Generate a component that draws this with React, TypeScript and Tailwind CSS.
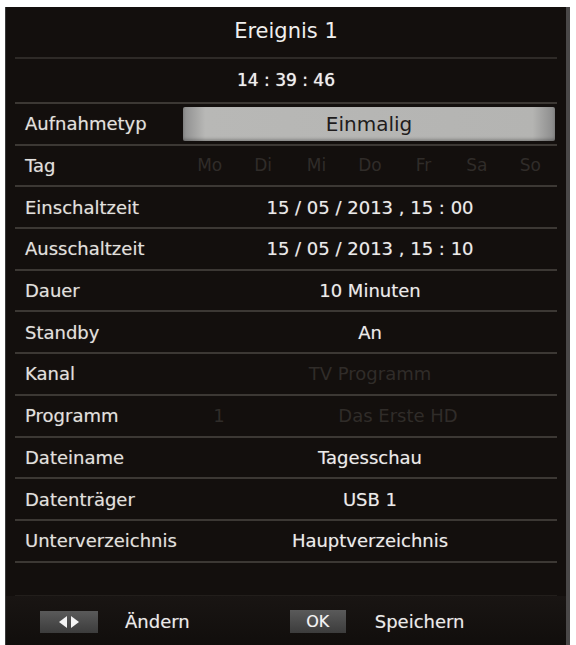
const font = "font-['DejaVu_Sans',Verdana,sans-serif]";

const rows: { label: string; value: string; dim?: boolean }[] = [
  { label: "Einschaltzeit", value: "15 / 05 / 2013 , 15 : 00" },
  { label: "Ausschaltzeit", value: "15 / 05 / 2013 , 15 : 10" },
  { label: "Dauer", value: "10 Minuten" },
  { label: "Standby", value: "An" },
  { label: "Kanal", value: "TV Programm", dim: true },
];

const rows2: { label: string; value: string }[] = [
  { label: "Dateiname", value: "Tagesschau" },
  { label: "Datenträger", value: "USB 1" },
  { label: "Unterverzeichnis", value: "Hauptverzeichnis" },
];

const days = ["Mo", "Di", "Mi", "Do", "Fr", "Sa", "So"];

function Row({ label, children }: { label: string; children: React.ReactNode }) {
  return (
    <div className="mx-[9px] flex h-[41.7px] items-center border-b-2 border-[#3c3834]">
      <div className="w-[168px] shrink-0 pl-[10px] text-[18px] text-[#e2e0de] [text-shadow:0_0_1px_rgba(255,255,255,0.35)]">
        {label}
      </div>
      <div className="flex flex-1 items-center">{children}</div>
    </div>
  );
}

export default function App() {
  return (
    <div className={`h-[645px] w-[576px] overflow-hidden bg-white pl-[5px] pr-[6px] pt-[7px] ${font}`}>
      <div className="flex h-[638px] flex-col border-l border-r-4 border-l-[#3a3a3a] border-r-[#4a4848] bg-[#130f0d]">
        <div className="mx-[9px] flex h-[52px] shrink-0 items-center justify-center border-b-2 border-[#2e2a27] text-[21px] text-[#f0efee]">
          Ereignis 1
        </div>
        <div className="mx-[9px] flex h-[45px] shrink-0 items-center justify-center border-b-2 border-[#3c3834] text-[17px] text-[#f0efee] [text-shadow:0_0_1px_rgba(255,255,255,0.8)]">
          14 : 39 : 46
        </div>

        <Row label="Aufnahmetyp">
          <div className="mr-[2px] flex h-[34px] flex-1 items-center justify-center rounded-[2px] bg-[linear-gradient(to_right,#8e8e8e,#b8b8b6_6%,#b4b4b2_94%,#8a8a8a)] text-[20px] text-[#1e1c1c] shadow-[inset_0_-2px_3px_rgba(0,0,0,0.25)]">
            Einmalig
          </div>
        </Row>
        <Row label="Tag">
          {days.map((d) => (
            <div key={d} className="flex-1 text-center text-[17px] text-[#302c29]">
              {d}
            </div>
          ))}
        </Row>
        {rows.map((r) => (
          <Row key={r.label} label={r.label}>
            <div
              className={`flex-1 text-center text-[18px] ${
                r.dim ? "text-[#302c29]" : "text-[#ecebea] [text-shadow:0_0_1px_rgba(255,255,255,0.35)]"
              }`}
            >
              {r.value}
            </div>
          </Row>
        ))}
        <Row label="Programm">
          <div className="w-[72px] text-center text-[18px] text-[#302c29]">1</div>
          <div className="flex-1 pr-[16px] text-center text-[18px] text-[#302c29]">Das Erste HD</div>
        </Row>
        {rows2.map((r) => (
          <Row key={r.label} label={r.label}>
            <div className="flex-1 text-center text-[18px] text-[#ecebea] [text-shadow:0_0_1px_rgba(255,255,255,0.35)]">
              {r.value}
            </div>
          </Row>
        ))}

        <div className="mx-[9px] h-[33px] shrink-0 border-b border-[#221e1b]" />

        <div className="flex flex-1 items-center bg-[linear-gradient(to_bottom,#191513,#110e0c)] pt-[3px] text-[18px] text-[#ecebea] [text-shadow:0_0_1px_rgba(255,255,255,0.35)]">
          <div className="ml-[34px] flex h-[22px] w-[58px] items-center justify-center gap-[2px] bg-[linear-gradient(to_bottom,#5a5a5a,#3c3c3c)]">
            <svg width="24" height="14" viewBox="0 0 24 14" aria-hidden="true">
              <path d="M10 1 L2 7 L10 13 Z" fill="#f4f4f4" />
              <path d="M14 1 L22 7 L14 13 Z" fill="#f4f4f4" />
            </svg>
          </div>
          <span className="ml-[27px]">Ändern</span>
          <div className="ml-[100px] flex h-[23px] w-[56px] items-center justify-center bg-[linear-gradient(to_bottom,#5a5a5a,#3c3c3c)] text-[16px] text-[#f4f4f4]">
            OK
          </div>
          <span className="ml-[29px]">Speichern</span>
        </div>
      </div>
    </div>
  );
}
